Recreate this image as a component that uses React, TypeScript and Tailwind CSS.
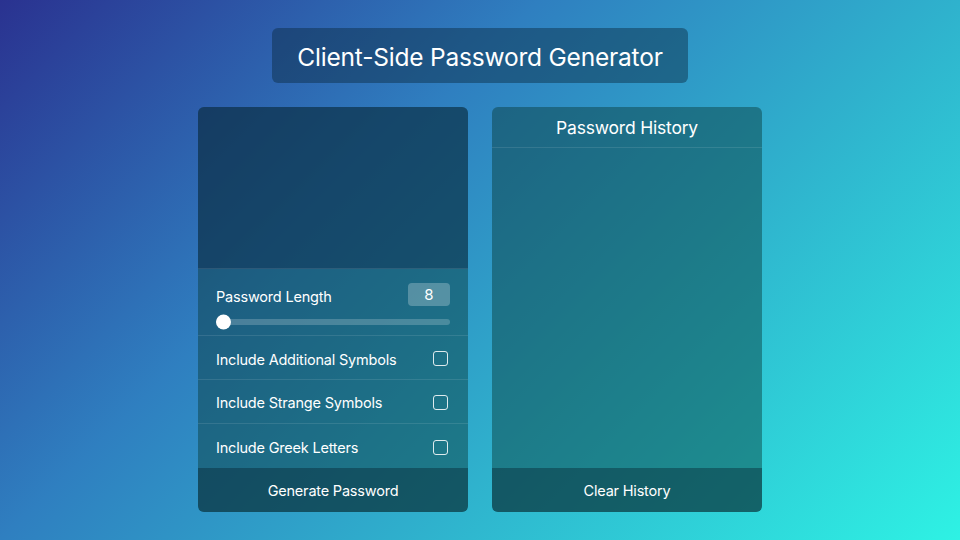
import { useState } from "react";

const options = [
  "Include Additional Symbols",
  "Include Strange Symbols",
  "Include Greek Letters",
];

export default function App() {
  const [length] = useState(8);

  return (
    <div
      className="flex h-[540px] w-[960px] flex-col items-center bg-[linear-gradient(135deg,#2a3290_0%,#2f7fc0_36%,#2fb2cd_64%,#2ef2e4_100%)] text-white"
      style={{ fontFamily: "Inter, 'Noto Sans', sans-serif" }}
    >
      <div className="mt-[28px] flex h-[55px] w-[416px] items-center justify-center rounded-md bg-[#0a2a40]/45 pt-[3px] text-[24.5px] tracking-[-0.2px]">
        Client-Side Password Generator
      </div>

      <div className="mt-[24px] flex gap-[24px]">
        {/* generator */}
        <div className="flex h-[405px] w-[270px] flex-col overflow-hidden rounded-md bg-[#083938]/45">
          <div className="h-[162px] border-b border-white/10 bg-[#0a1c40]/35" />
          <div className="flex h-[68px] flex-col border-b border-white/10 px-[18px] pt-[14px]">
            <div className="flex items-center justify-between">
              <span className="pt-[3px] text-[14.5px] tracking-[-0.2px]">Password Length</span>
              <span className="flex h-[23px] w-[42px] items-center justify-center rounded bg-white/25 pt-[1px] text-[15px]">
                {length}
              </span>
            </div>
            <div className="relative mt-[12px] h-[6px] rounded-full bg-white/20">
              <span className="absolute left-0 top-1/2 h-[15px] w-[15px] -translate-y-1/2 rounded-full bg-white" />
            </div>
          </div>
          {options.map((o, i) => (
            <div
              key={o}
              className={`flex h-[44px] items-center justify-between px-[18px] pt-[2px] ${i < options.length - 1 ? "border-b border-white/10" : ""}`}
            >
              <span className="pt-[1px] text-[14.5px] tracking-[-0.2px]">{o}</span>
              <span className="mr-[2px] h-[15px] w-[15px] rounded-[3px] border-[1.5px] border-white/85" />
            </div>
          ))}
          <button className="mt-auto h-[44px] bg-[#05202c]/40 pt-[2px] text-[14.5px] tracking-[-0.2px]">
            Generate Password
          </button>
        </div>

        {/* history */}
        <div className="flex h-[405px] w-[270px] flex-col overflow-hidden rounded-md bg-[#083938]/45">
          <div className="flex h-[41px] items-center justify-center border-b border-white/10 pt-[3px] text-[17.5px] tracking-[-0.2px]">
            Password History
          </div>
          <div className="flex-1" />
          <button className="h-[44px] bg-[#05202c]/40 pt-[2px] text-[14.5px] tracking-[-0.2px]">
            Clear History
          </button>
        </div>
      </div>
    </div>
  );
}
